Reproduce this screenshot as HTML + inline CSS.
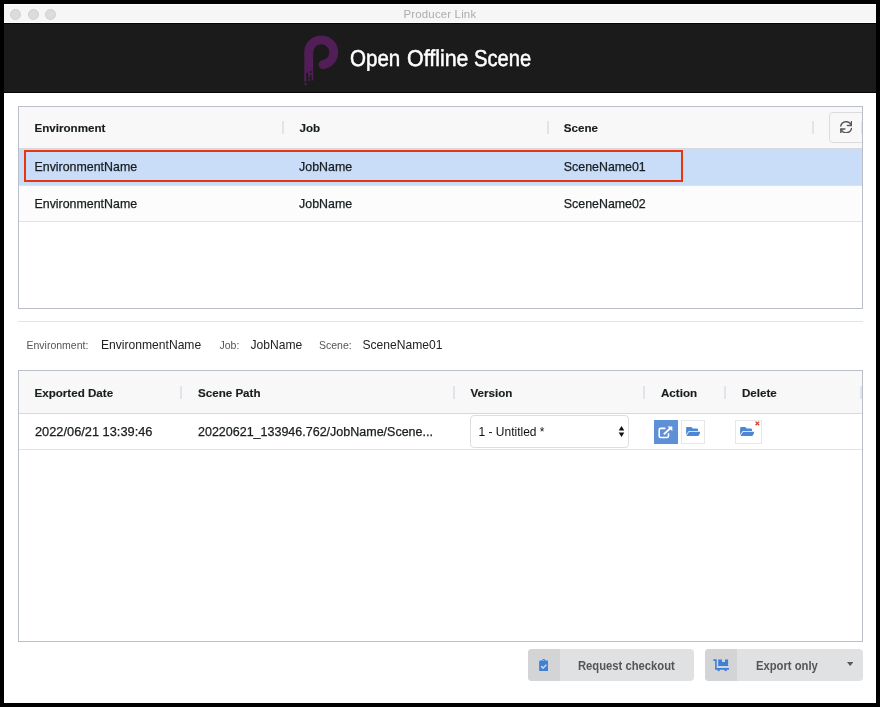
<!DOCTYPE html>
<html>
<head>
<meta charset="utf-8">
<title>Producer Link</title>
<style>
*{box-sizing:border-box;margin:0;padding:0}
html,body{width:880px;height:707px;overflow:hidden;background:#000}
body{font-family:"Liberation Sans",sans-serif;position:relative;color:#181d1f}
.abs{position:absolute}
.t{position:absolute;white-space:nowrap;line-height:1}
#win{will-change:transform;left:4px;top:4px;width:872px;height:698.5px;background:#fff;overflow:hidden}
#tbar{left:0;top:0;width:872px;height:19px;background:#f6f6f6;border-top:1.5px solid #fdfdfd;border-bottom:0.5px solid #fff}
.dot{width:11px;height:11px;border-radius:50%;background:#dcdcdc;border:0.5px solid #d0d0d0;top:5px}
#hdr{left:0;top:19px;width:872px;height:70px;background:#1b1b1b;border-top:1.5px solid #050505;border-bottom:1.4px solid #050505}
.grid{border:1px solid #babfc7;background:#fff;overflow:hidden}
.gh{left:0;top:0;width:100%;background:#f8f8f8;border-bottom:1px solid #d5d8dc}
.sep{width:2px;background:#e1e4ea}
.hl{font-weight:bold;font-size:11.6px;color:#181d1f;-webkit-text-stroke:0.15px #181d1f}
.cell{font-size:12.4px;color:#181d1f;-webkit-text-stroke:0.25px #181d1f}
.ht{text-rendering:geometricPrecision;font-size:23px;color:#fff;-webkit-text-stroke:0.5px #fff;transform-origin:0 18.8px}
.btn{background:#e0e1e2;border-radius:4px;overflow:hidden}
.btn .ic{left:0;top:0;height:100%;background:#d3d4d5}
.btn .lb{font-weight:bold;font-size:13px;color:#555;transform-origin:0 0;transform:scaleX(0.865)}
</style>
</head>
<body>
<div id="win" class="abs">
  <!-- title bar -->
  <div id="tbar" class="abs">
    <div class="abs dot" style="left:6px;top:3.5px"></div>
    <div class="abs dot" style="left:23.5px;top:3.5px"></div>
    <div class="abs dot" style="left:41px;top:3.5px"></div>
    <div class="t" id="ttl" style="left:399.5px;top:4px;font-size:11.5px;color:#adadad;letter-spacing:0.14px">Producer Link</div>
  </div>
  <!-- dark header -->
  <div id="hdr" class="abs">
    <svg class="abs" style="left:296px;top:5.5px" width="44" height="60" viewBox="300 30 44 60">
      <path d="M308.75 53 L308.75 52.3 A12.5 12.5 0 1 1 323.05 64.7" fill="none" stroke="#521e57" stroke-width="8.9" stroke-linecap="round"/>
      <g fill="#521e57">
      <rect x="304.3" y="52.3" width="8.9" height="18.9"/>
      <rect x="304.3" y="71" width="2" height="10.7"/>
      <rect x="304.5" y="83" width="2" height="2"/>
      <rect x="306.3" y="71" width="1.8" height="1.8"/>
      <rect x="308.1" y="71" width="1.8" height="6.5"/>
      <rect x="308.1" y="78.8" width="1.8" height="2"/>
      <rect x="309.9" y="72.9" width="1.8" height="2.2"/>
      <rect x="311.6" y="71" width="1.6" height="9.4"/>
      </g>
    </svg>
    <div class="t ht" id="w1" style="left:345.5px;top:22.7px;transform:scale(0.893,1)">Open</div>
    <div class="t ht" id="w2" style="left:402.6px;top:22.7px;transform:scale(0.931,1)">Offline</div>
    <div class="t ht" id="w3" style="left:469.6px;top:22.7px;transform:scale(0.879,1)">Scene</div>
  </div>

  <!-- grid 1 -->
  <div class="abs grid" id="g1" style="left:13.5px;top:101.5px;width:845px;height:203px">
    <div class="abs gh" style="height:42px"></div>
    <div class="t hl" style="left:16px;top:15.4px">Environment</div>
    <div class="t hl" style="left:281px;top:15.4px">Job</div>
    <div class="t hl" style="left:545.3px;top:15.4px">Scene</div>
    <div class="abs sep" style="left:263px;top:14.5px;height:13px"></div>
    <div class="abs sep" style="left:528.3px;top:14.5px;height:13px"></div>
    <div class="abs sep" style="left:793.6px;top:14.5px;height:13px"></div>
    <div class="abs" style="left:810.4px;top:5.5px;width:40.6px;height:31px;border:1px solid #dcdcdc;border-radius:4px;background:#f8f8f8"></div>
    <svg class="abs" style="left:821.5px;top:14.4px" width="12.4" height="12.4" viewBox="0 0 12.3 12.3" fill="none" stroke="#575757" stroke-width="1.45" stroke-linecap="round" stroke-linejoin="round">
      <path d="M0.8 4.9 A5.45 5.45 0 0 1 11.2 4.2"/><path d="M11.45 0.6 V4.45 H7.4"/>
      <path d="M11.5 7.4 A5.45 5.45 0 0 1 1.1 8.1"/><path d="M0.85 11.7 V7.85 H4.9"/>
    </svg>
    <div class="abs sep" style="left:842.5px;top:14.5px;height:13px"></div>
    <!-- rows -->
    <div class="abs" style="left:0;top:42px;width:100%;height:37px;background:#c9ddf8;border-bottom:1px solid #dde2eb"></div>
    <div class="abs" style="left:0;top:79px;width:100%;height:36.5px;background:#fcfcfc;border-bottom:1px solid #dde2eb"></div>
    <div class="abs" style="left:5.5px;top:43.5px;width:659px;height:32px;border:2px solid #e8350e"></div>
    <div class="t cell" style="left:16px;top:54px">EnvironmentName</div>
    <div class="t cell" style="left:280.6px;top:54px">JobName</div>
    <div class="t cell" style="left:545.3px;top:54px">SceneName01</div>
    <div class="t cell" style="left:16px;top:91px">EnvironmentName</div>
    <div class="t cell" style="left:280.6px;top:91px">JobName</div>
    <div class="t cell" style="left:545.3px;top:91px">SceneName02</div>
  </div>

  <!-- hr -->
  <div class="abs" style="left:13.5px;top:317px;width:845px;height:1px;background:#e4e4e4"></div>

  <!-- info line -->
  <div class="t" style="left:22.5px;top:335.6px;font-size:10.5px;color:#555">Environment:</div>
  <div class="t" style="left:97px;top:334.5px;font-size:12.1px;color:#222">EnvironmentName</div>
  <div class="t" style="left:215.5px;top:335.6px;font-size:10.5px;color:#555">Job:</div>
  <div class="t" style="left:246.5px;top:334.5px;font-size:12.1px;color:#222">JobName</div>
  <div class="t" style="left:315px;top:335.6px;font-size:10.5px;color:#555">Scene:</div>
  <div class="t" style="left:358.5px;top:334.5px;font-size:12.1px;color:#222">SceneName01</div>

  <!-- grid 2 -->
  <div class="abs grid" id="g2" style="left:13.5px;top:365.5px;width:845px;height:272.5px">
    <div class="abs gh" style="height:43.5px"></div>
    <div class="t hl" style="left:16px;top:16.5px">Exported Date</div>
    <div class="t hl" style="left:179.5px;top:16.5px">Scene Path</div>
    <div class="t hl" style="left:452px;top:16.5px">Version</div>
    <div class="t hl" style="left:642.5px;top:16.5px">Action</div>
    <div class="t hl" style="left:723.5px;top:16.5px">Delete</div>
    <div class="abs sep" style="left:161.3px;top:15.5px;height:13px"></div>
    <div class="abs sep" style="left:434.3px;top:15.5px;height:13px"></div>
    <div class="abs sep" style="left:624.2px;top:15.5px;height:13px"></div>
    <div class="abs sep" style="left:705.6px;top:15.5px;height:13px"></div>
    <div class="abs sep" style="left:841.5px;top:15.5px;height:13px"></div>
    <div class="abs" style="left:0;top:43.5px;width:100%;height:36px;background:#fff;border-bottom:1px solid #dde2eb"></div>
    <div class="t cell" style="left:16.5px;top:55.5px;font-size:12.8px">2022/06/21 13:39:46</div>
    <div class="t cell" style="left:179.5px;top:55.5px;font-size:12.5px">20220621_133946.762/JobName/Scene...</div>
    <!-- select -->
    <div class="abs" style="left:451px;top:44.5px;width:159px;height:33px;border:1px solid #dedede;border-radius:4px;background:#fff"></div>
    <div class="t" style="left:460px;top:55.5px;font-size:12px;color:#111">1 - Untitled *</div>
    <svg class="abs" style="left:599px;top:55.3px" width="7" height="12" viewBox="0 0 7 12"><path d="M3.5 0 L6.3 4.4 L0.7 4.4 Z M3.5 11 L6.3 6.6 L0.7 6.6 Z" fill="#111"/></svg>
    <!-- action buttons -->
    <div class="abs" style="left:635px;top:49px;width:24px;height:24px;background:#5e90d8"></div>
    <svg class="abs" style="left:639.6px;top:55.1px" width="15" height="13" viewBox="0 0 15 13">
      <path d="M7.4 2.4 H2.7 Q1.2 2.4 1.2 3.9 V10 Q1.2 11.5 2.7 11.5 H9 Q10.5 11.5 10.5 10 V7.3" fill="none" stroke="#fff" stroke-width="1.6"/>
      <path d="M5.8 8.4 L12.3 2.2" fill="none" stroke="#fff" stroke-width="1.9"/>
      <path d="M9.5 0.4 H14.3 V5.2 Z" fill="#fff"/>
    </svg>
    <div class="abs" style="left:662px;top:49px;width:24px;height:24px;background:#fff;border:1px solid #e7e7e7"></div>
    <svg class="abs fo" style="left:667.2px;top:56px" width="14.5" height="9.5" viewBox="0 0 576 384"><path fill="#4d86d6" d="M572.694 228.331l-72.425 124.155A64 64 0 0 1 444.985 384H45.025c-18.523 0-30.064-20.093-20.731-36.093l72.425-124.155A64 64 0 0 1 152 192h399.964c18.523 0 30.064 20.093 20.73 36.331zM152 160h328v-48c0-26.51-21.49-48-48-48H272l-64-64H48C21.49 0 0 21.49 0 48v278.046l69.077-118.418C86.214 178.252 117.989 160 152 160z"/></svg>
    <div class="abs" style="left:716px;top:49px;width:27.5px;height:24px;background:#fff;border:1px solid #e7e7e7"></div>
    <svg class="abs fo" style="left:721px;top:56px" width="14.5" height="9.5" viewBox="0 0 576 384"><path fill="#4d86d6" d="M572.694 228.331l-72.425 124.155A64 64 0 0 1 444.985 384H45.025c-18.523 0-30.064-20.093-20.731-36.093l72.425-124.155A64 64 0 0 1 152 192h399.964c18.523 0 30.064 20.093 20.73 36.331zM152 160h328v-48c0-26.51-21.49-48-48-48H272l-64-64H48C21.49 0 0 21.49 0 48v278.046l69.077-118.418C86.214 178.252 117.989 160 152 160z"/></svg>
    <svg class="abs" style="left:736.5px;top:50.2px" width="5" height="5" viewBox="0 0 5 5"><path d="M0.6 0.6 L4.2 4.2 M4.2 0.6 L0.6 4.2" stroke="#d2402f" stroke-width="1.3" fill="none"/></svg>
  </div>

  <!-- bottom buttons -->
  <div class="abs btn" style="left:524px;top:645px;width:166px;height:31.5px">
    <div class="abs ic" style="width:31.5px"></div>
    <svg class="abs" style="left:10.9px;top:9.8px" width="9.5" height="12.3" viewBox="0 0 384 512"><path fill="#3f7fd6" d="M336 64h-80c0-35.3-28.7-64-64-64s-64 28.700-64 64H48C21.500 64 0 85.500 0 112v352c0 26.500 21.500 48 48 48h288c26.500 0 48-21.500 48-48V112c0-26.500-21.500-48-48-48zM192 40c13.300 0 24 10.700 24 24s-10.700 24-24 24-24-10.700-24-24 10.700-24 24-24zm121.200 231.800l-143 141.800c-4.700 4.700-12.300 4.600-17-.1l-82.600-83.300c-4.700-4.700-4.600-12.300.1-17L99.100 285c4.700-4.700 12.300-4.600 17 .1l46 46.400 106-105.200c4.700-4.700 12.300-4.600 17 .1l28.200 28.400c4.700 4.800 4.600 12.300-.1 17z"/></svg>
    <div class="t lb" style="left:50px;top:9.5px">Request checkout</div>
  </div>
  <div class="abs btn" style="left:700.8px;top:645px;width:157.8px;height:31.5px">
    <div class="abs ic" style="width:32.3px"></div>
    <svg class="abs" style="left:8.4px;top:9.8px" width="16.5" height="13" viewBox="0 0 16.5 13">
      <path d="M0.4 1.1 H2.9 V9.9 H16" fill="none" stroke="#3f7fd6" stroke-width="1.6"/>
      <path d="M5.2 0.6 H9 V3 H12 V0.6 H15.1 V7 H5.2 Z" fill="#3f7fd6"/>
      <circle cx="5.6" cy="11" r="1.2" fill="#3f7fd6"/>
      <circle cx="12.6" cy="11" r="1.2" fill="#3f7fd6"/>
    </svg>
    <div class="t lb" style="left:51.1px;top:9.5px">Export only</div>
    <svg class="abs" style="left:142.2px;top:13.3px" width="6.3" height="4.1" viewBox="0 0 7 4.5"><path d="M0 0 H7 L3.5 4.5 Z" fill="#5a5a5a"/></svg>
  </div>
</div>
</body>
</html>
